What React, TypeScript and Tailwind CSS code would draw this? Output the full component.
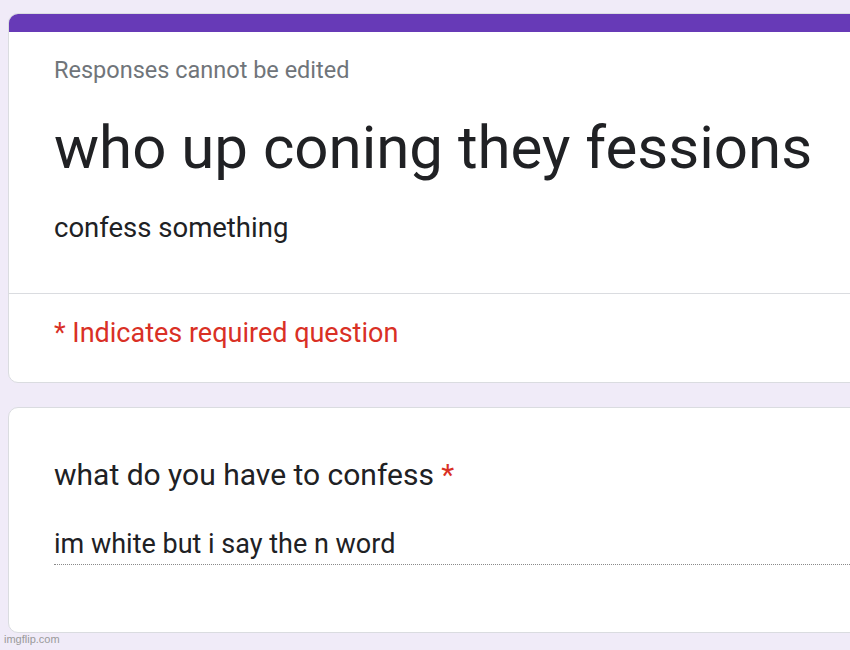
export default function App() {
  return (
    <div className="relative h-[650px] w-[850px] overflow-hidden bg-[#f0ebf8] font-['Roboto',sans-serif]">
      <div className="flex w-[900px] flex-col gap-[24px] pl-2 pt-[13px]">
        {/* Header card */}
        <div className="overflow-hidden rounded-[10px] border border-[#dadce0] bg-white">
          <div className="h-[18px] bg-[#673ab7]" />
          <div className="px-[45px] pt-[25px] pb-[49px]">
            <p className="text-[23.5px] leading-[27px] text-[#70757a]">Responses cannot be edited</p>
            <h1 className="mt-[28px] text-[60px] leading-[72px] text-[#202124]">who up coning they fessions</h1>
            <p className="mt-[28px] text-[27.5px] leading-[32px] text-[#202124]">confess something</p>
          </div>
          <div className="h-px bg-[#dadce0]" />
          <div className="px-[45px] pt-[23px] pb-[33px]">
            <p className="text-[27px] leading-[32px] text-[#d93025]">* Indicates required question</p>
          </div>
        </div>

        {/* Question card */}
        <div className="rounded-[10px] border border-[#dadce0] bg-white px-[45px] pt-[49px] pb-[67px]">
          <p className="text-[30px] leading-[36px] text-[#202124]">
            what do you have to confess <span className="text-[#d93025]">*</span>
          </p>
          <div className="mt-[35px] border-b border-dotted border-[#8a8a8a] pb-[4px] text-[27px] leading-[32px] text-[#202124]">
            im white but i say the n word
          </div>
        </div>
      </div>
      <span className="absolute bottom-[3px] left-[4px] font-['Liberation_Sans',sans-serif] text-[11px] text-[#9a9a9a]">imgflip.com</span>
    </div>
  );
}
